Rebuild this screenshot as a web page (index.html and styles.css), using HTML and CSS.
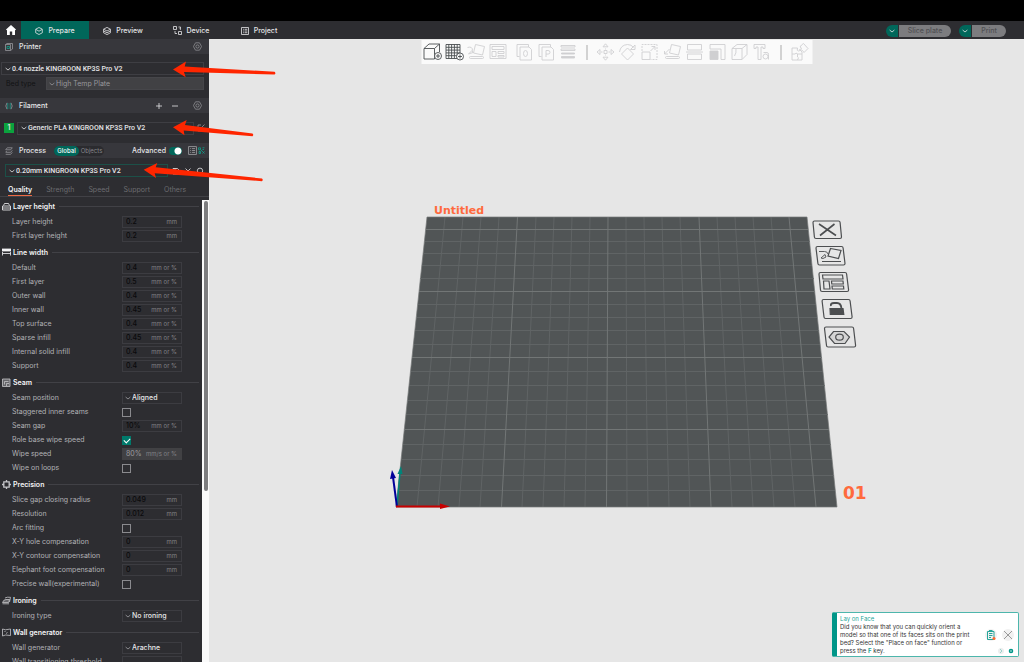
FILE: index.html
```html
<!DOCTYPE html>
<html lang="en">
<head>
<meta charset="utf-8">
<title>Untitled</title>
<link rel="stylesheet" href="styles.css">
</head>
<body>
<svg class="defs" width="0" height="0" aria-hidden="true">
  <symbol id="chev" viewBox="0 0 6 6"><path d="M.6 2l2.400 2 2.400-2"/></symbol>
  <symbol id="nut" viewBox="0 0 10 10"><path d="M2.800.900h4.400L9.500 5 7.200 9.100H2.800L.5 5z"/><circle cx="5" cy="5" r="1.800"/></symbol>
</svg>
<div class="app">
  <div class="strip"></div>
  <header class="topbar">
    <button class="home" aria-label="Home"><svg width="10" height="10" viewBox="0 0 10 10"><path d="M5 0l5 4.400-.7.8L9 5v5H6.200V6.500H3.800V10H1V5l-.4.2L0 4.400z"/></svg></button>
    <nav class="tabs">
      <button class="tab active"><svg class="ic" width="8" height="8" viewBox="0 0 8 8"><path d="M4 .5l3.300 1.700v3.600L4 7.500.7 5.800V2.200zM.9 2.400L4 4.200l3.100-1.800"/></svg>Prepare</button>
      <button class="tab"><svg class="ic" width="8" height="8" viewBox="0 0 8 8"><path d="M4 .4l3.400 1.800L4 4 .6 2.200zM.6 2.200v3.600L4 7.600l3.400-1.800V2.200M.6 4L4 5.800 7.400 4"/></svg>Preview</button>
      <button class="tab"><svg class="ic" width="9" height="9" viewBox="0 0 9 9"><path d="M.5.5h3v3h-3zM5.500 5.500h3v3h-3zM5.500 1h2v2.500M2 5v2.500h2M7.500 3.500L6.500 2.700"/></svg>Device</button>
      <button class="tab"><svg class="ic" width="8" height="8" viewBox="0 0 8 8"><path d="M.5.5h7v7h-7zM2 2.300h.8M3.600 2.300h2.700M2 4h.8M3.600 4h2.700M2 5.700h.8M3.600 5.700h2.700"/></svg>Project</button>
    </nav>
    <div class="actions">
      <div class="pill"><button class="drop" aria-label="Slice options"><svg class="ic" width="6" height="6"><use href="#chev"/></svg></button><button class="go slice" disabled>Slice plate</button></div>
      <div class="pill"><button class="drop" aria-label="Print options"><svg class="ic" width="6" height="6"><use href="#chev"/></svg></button><button class="go" disabled>Print</button></div>
    </div>
  </header>
  <div class="main">
    <aside class="side">
      <div class="bar">
        <svg class="ic dim" width="8" height="8" viewBox="0 0 8 8"><path d="M.5 1.500h5v6h-5zM.5 1.500l1.500-1h5.500v5.500l-2 1.500"/><path class="teal" d="M2 3.500h2.500v2H2z"/></svg>
        <h2>Printer</h2>
        <button class="icon end" aria-label="Printer settings"><svg class="ic dim" width="9" height="9"><use href="#nut"/></svg></button>
      </div>
      <div class="block printer">
        <button class="combo"><svg class="ic" width="6" height="6"><use href="#chev"/></svg>0.4 nozzle KINGROON KP3S Pro V2</button>
        <div class="bed"><span>Bed type</span><button class="combo gray"><svg class="ic" width="6" height="6"><use href="#chev"/></svg>High Temp Plate</button></div>
      </div>
      <div class="bar">
        <svg class="ic dim" width="8" height="8" viewBox="0 0 8 8"><path d="M2 .8Q-.4 4 2 7.200M6 .8q2.400 3.200 0 6.400"/><path class="teal" d="M2.800 1v6M5.200 1v6"/></svg>
        <h2>Filament</h2>
        <button class="icon end" aria-label="Add filament"><svg class="ic" width="8" height="8" viewBox="0 0 8 8"><path d="M4 1v6M1 4h6"/></svg></button>
        <button class="icon" aria-label="Remove filament"><svg class="ic" width="8" height="8" viewBox="0 0 8 8"><path d="M1 4h6"/></svg></button>
        <button class="icon far" aria-label="Filament settings"><svg class="ic dim" width="9" height="9"><use href="#nut"/></svg></button>
      </div>
      <div class="block filament">
        <span class="slot">1</span>
        <button class="combo"><svg class="ic" width="6" height="6"><use href="#chev"/></svg>Generic PLA KINGROON KP3S Pro V2</button>
        <button class="icon" aria-label="Edit filament"><svg class="ic dim" width="8" height="8" viewBox="0 0 8 8"><path d="M4 1H1v6h6V4M3 5l4.500-4.500"/></svg></button>
      </div>
      <div class="bar modes">
        <svg class="ic dim" width="8" height="8" viewBox="0 0 8 8"><path d="M2.300.8h5l-1.600 2h-5zM.7 5.200l1-1.200M.7 5.300h5l1.600-2M.7 7.300h5l1.600-2"/></svg>
        <h2>Process</h2>
        <div class="seg"><button class="on">Global</button><button>Objects</button></div>
        <label class="adv" for="adv">Advanced</label>
        <input class="switch" type="checkbox" id="adv" checked>
        <button class="icon" aria-label="Compare"><svg class="ic dim" width="9" height="9" viewBox="0 0 8 8"><path d="M.5.5h7v7h-7zM2 2.300h.8M3.600 2.300h2.700M2 4h.8M3.600 4h2.700M2 5.700h.8M3.600 5.700h2.700"/></svg></button>
        <button class="icon" aria-label="Search settings"><svg class="ic" width="7" height="7" viewBox="0 0 7 7"><path class="teal" d="M.5.800h2v2h-2zM4.500.800h2M4.500 2.500h1.500M1 4.500h1.500v2H1zM3 3l3.500 3.500M4.500 6.500l2-2"/></svg></button>
      </div>
      <div class="block process">
        <button class="combo tealed"><svg class="ic" width="6" height="6"><use href="#chev"/></svg>0.20mm KINGROON KP3S Pro V2</button>
        <button class="icon" aria-label="Save"><svg class="ic" width="8" height="8" viewBox="0 0 8 8"><path d="M1 1.500h4.500L7 3v4H1zM3 1.500v2h2"/></svg></button>
        <button class="icon" aria-label="Delete"><svg class="ic" width="8" height="8" viewBox="0 0 8 8"><path d="M1.500 1.500l5 5M6.500 1.500l-5 5"/></svg></button>
        <button class="icon" aria-label="Search"><svg class="ic" width="8" height="8" viewBox="0 0 8 8"><circle cx="4" cy="3.800" r="2.700"/><path d="M5.800 5.800l1 1.200"/></svg></button>
      </div>
      <nav class="pages"><button class="on">Quality</button><button>Strength</button><button>Speed</button><button>Support</button><button>Others</button></nav>
      <div class="panel">
        <form class="form">
          <h3><svg class="ic" width="9" height="9" viewBox="0 0 9 9"><path d="M.5 4h8v4h-8zM.5 6h8M1.500 3.500l1-2h4l1 2"/></svg>Layer height</h3>
          <div class="row"><label for="a1">Layer height</label><span class="field"><input id="a1" value="0.2"><i>mm</i></span></div>
          <div class="row"><label for="a2">First layer height</label><span class="field"><input id="a2" value="0.2"><i>mm</i></span></div>
          <h3><svg class="ic" width="9" height="9" viewBox="0 0 9 9"><path class="solid" d="M0 1h9v2H0z"/><path d="M.5 4v3.500M8.500 4v3.500M.5 5.500h8"/></svg>Line width</h3>
          <div class="row"><label for="b1">Default</label><span class="field"><input id="b1" value="0.4"><i>mm or %</i></span></div>
          <div class="row"><label for="b2">First layer</label><span class="field"><input id="b2" value="0.5"><i>mm or %</i></span></div>
          <div class="row"><label for="b3">Outer wall</label><span class="field"><input id="b3" value="0.4"><i>mm or %</i></span></div>
          <div class="row"><label for="b4">Inner wall</label><span class="field"><input id="b4" value="0.45"><i>mm or %</i></span></div>
          <div class="row"><label for="b5">Top surface</label><span class="field"><input id="b5" value="0.4"><i>mm or %</i></span></div>
          <div class="row"><label for="b6">Sparse infill</label><span class="field"><input id="b6" value="0.45"><i>mm or %</i></span></div>
          <div class="row"><label for="b7">Internal solid infill</label><span class="field"><input id="b7" value="0.4"><i>mm or %</i></span></div>
          <div class="row"><label for="b8">Support</label><span class="field"><input id="b8" value="0.4"><i>mm or %</i></span></div>
          <h3><svg class="ic soft" width="9" height="9" viewBox="0 0 9 9"><path class="shade" d="M.5 1h7.500v7.500H.5z"/><path d="M2.500 6.500v-3h4M4.500 8V5.500H7"/></svg>Seam</h3>
          <div class="row"><label for="c1">Seam position</label><span class="field pick"><svg class="ic" width="6" height="6"><use href="#chev"/></svg><select id="c1"><option>Aligned</option></select></span></div>
          <div class="row"><label for="c2">Staggered inner seams</label><input class="tick" type="checkbox" id="c2"></div>
          <div class="row"><label for="c3">Seam gap</label><span class="field"><input id="c3" value="10%"><i>mm or %</i></span></div>
          <div class="row"><label for="c4">Role base wipe speed</label><input class="tick" type="checkbox" id="c4" checked></div>
          <div class="row"><label for="c5">Wipe speed</label><span class="field off"><input id="c5" value="80%" disabled><i>mm/s or %</i></span></div>
          <div class="row"><label for="c6">Wipe on loops</label><input class="tick" type="checkbox" id="c6"></div>
          <h3><svg class="ic soft" width="9" height="9" viewBox="0 0 9 9"><path class="bold" d="M1.800 1.800h5.400v5.400H1.800zM4.500 0v2.500M4.500 6.500V9M0 4.500h2.500M6.500 4.500H9"/></svg>Precision</h3>
          <div class="row"><label for="d1">Slice gap closing radius</label><span class="field"><input id="d1" value="0.049"><i>mm</i></span></div>
          <div class="row"><label for="d2">Resolution</label><span class="field"><input id="d2" value="0.012"><i>mm</i></span></div>
          <div class="row"><label for="d3">Arc fitting</label><input class="tick" type="checkbox" id="d3"></div>
          <div class="row"><label for="d4">X-Y hole compensation</label><span class="field"><input id="d4" value="0"><i>mm</i></span></div>
          <div class="row"><label for="d5">X-Y contour compensation</label><span class="field"><input id="d5" value="0"><i>mm</i></span></div>
          <div class="row"><label for="d6">Elephant foot compensation</label><span class="field"><input id="d6" value="0"><i>mm</i></span></div>
          <div class="row"><label for="d7">Precise wall(experimental)</label><input class="tick" type="checkbox" id="d7"></div>
          <h3><svg class="ic soft" width="9" height="9" viewBox="0 0 9 9"><path class="shade" d="M.5 6.500Q1.500 3.500 4 3.500h3.500l-.8 3z"/><path d="M3 2q2-1.200 5.500-.7L7.500 6M.5 7.800h6.500"/></svg>Ironing</h3>
          <div class="row"><label for="e1">Ironing type</label><span class="field pick"><svg class="ic" width="6" height="6"><use href="#chev"/></svg><select id="e1"><option>No ironing</option></select></span></div>
          <h3><svg class="ic soft" width="9" height="9" viewBox="0 0 9 9"><path d="M.5 1l3 .8 5-.8v6.500L3.500 7l-3 1zM2.500 3.500h1M4 5.500l1.500-1"/></svg>Wall generator</h3>
          <div class="row"><label for="f1">Wall generator</label><span class="field pick"><svg class="ic" width="6" height="6"><use href="#chev"/></svg><select id="f1"><option>Arachne</option></select></span></div>
          <div class="row"><label for="f2">Wall transitioning threshold</label><span class="field"><input id="f2"><i></i></span></div>
        </form>
        <div class="track"><div class="thumb"></div></div>
      </div>
    </aside>
    <main class="view">
      <svg class="scene" viewBox="209 39 815 623">
        <path class="plate" d="M427 217H807L837 507H396z"/>
        <path class="thin" d="M445 217L417 507M463 217L438 507M481 217L459 507M499 217L480 507M536 217L522 507M554 217L543 507M572 217L564 507M590 217L585 507M626 217L627 507M644 217L648 507M662 217L669 507M680 217L690 507M717 217L732 507M735 217L753 507M753 217L774 507M771 217L795 507"/>
        <path class="thin" d="M398 490.500H835M399 475.500H834M401 459.500H832M403 444.500H831M406 414.500H828M408 400.500H826M409 385.500H825M411 371.500H823M414 344.500H820M415 330.500H819M417 317.500H817M418 304.500H816M420 278.500H814M422 265.500H812M423 253.500H811M425 241.500H810"/>
        <path class="thick" d="M517.500 217L501.500 507M608 217L606.500 507M699 217L711 507M789 217L816 507M405 429.500H829M412 357.500H822M419 291.500H815M426 229.500H808"/>
        <path class="edge" d="M427 217H807L837 507H396z"/>
        <text class="name" x="434" y="214">Untitled</text>
        <text class="num" x="843" y="499">01</text>
        <g class="axes">
          <path stroke="#00857a" stroke-width="1.500" d="M397 506L400 473"/><path fill="#00857a" d="M397.500 474L401 466l1.500 8z"/>
          <path stroke="#000099" stroke-width="2" d="M397 507L393 477"/><path fill="#000099" d="M390 479L392 470l4 8z"/>
          <path stroke="#c80000" stroke-width="2" d="M396 506.500H442"/><path fill="#c80000" d="M440 503.500L450 506.500 440 509z"/>
        </g>
        <g class="tools">
          <path d="M814.500 221h24q1.500 0 1.600 1.500l1.400 14.500q0 1.500-1.500 1.500h-24q-1.500 0-1.600-1.500l-1.400-14.500q0-1.500 1.500-1.500z"/>
          <path stroke-width="1.600" d="M819 224l17 11.500M834.500 224L820 235.500"/>
          <path d="M817.500 246.500h24q1.500 0 1.600 1.500l1.900 15.500q0 1.500-1.500 1.500h-24q-1.500 0-1.600-1.500L816 248q0-1.500 1.500-1.500z"/>
          <path d="M830.500 248.500l10.500 2-2.500 8-10.500-2.500zM822 261.500h19"/><path stroke-width=".9" d="M819 251.500h5.500q3 0 3.500 2.500M821 258l4-3.500 1 2.500-3 1.500z"/>
          <path d="M820.500 272.500h24.500q1.500 0 1.600 1.500l2 16q0 1.500-1.500 1.500h-25q-1.500 0-1.600-1.500l-1.500-16q0-1.500 1.500-1.500zM822.500 275h20l.5 4h-20zM823.500 281h5.500l1 8h-6zM831.500 281h11.500l.3 3h-11.500zM832 286h11.500l.3 3h-11.500z"/>
          <path d="M823.500 299.500h25q1.500 0 1.600 1.500l2 16q0 1.500-1.500 1.500h-25q-1.500 0-1.600-1.500l-1.900-16q0-1.500 1.400-1.500z"/>
          <path class="fill" d="M830 308.500h13l.8 6h-13.500z"/><path stroke-width="1.800" d="M831 306q-.8-3 3-3h3q4 0 4.500 5.500"/>
          <path d="M826 327h26q1.500 0 1.600 1.500l2 17q0 1.500-1.500 1.500h-26q-1.500 0-1.600-1.500l-2-17q0-1.500 1.500-1.500z"/>
          <path class="hex" d="M833.500 331.500h10.500l5.500 5.500-4.500 6.500h-10.500l-5.500-6.500z"/><ellipse cx="839.500" cy="337.200" rx="3.800" ry="3"/>
        </g>
      </svg>
      <div class="toolbar">
        <div class="grp on">
          <button aria-label="Add"><svg width="20" height="18" viewBox="0 0 20 18"><path d="M1.500 5.500h10.500v10.500H1.500zM1.500 5.500l5-4.500H17l-5 4.500M17 1v8"/><circle class="bg" cx="15.500" cy="13" r="3.500"/><path d="M15.500 11v4M13.500 13h4"/></svg></button>
          <button aria-label="Add plate"><svg width="20" height="18" viewBox="0 0 20 18"><path d="M1.500 1.500h14v14h-14zM4.300 1.500v14M7.100 1.500v14M9.900 1.500v14M12.700 1.500v14M1.500 4.300h14M1.500 7.100h14M1.500 9.900h14M1.500 12.700h14"/><circle class="bg" cx="15.500" cy="13.500" r="3.500"/><path d="M15.500 11.500v4M13.500 13.500h4"/></svg></button>
          <button class="no" aria-label="Auto orient"><svg width="20" height="18" viewBox="0 0 20 18"><path d="M9 1.500l9 2-2 8.500-9-2zM4 13.500h12q1 0 1 1t-1 1H4q-1 0-1-1t1-1zM1 4.500q5-1.500 5 3M2 11l3.500-3.500 1 2z"/></svg></button>
          <button class="no" aria-label="Arrange"><svg width="20" height="18" viewBox="0 0 20 18"><path d="M1.500 1.500h16v14h-16zM3.500 3.500h12v3h-12zM3.500 8.500h4v5h-4zM9.500 8.500h6v2h-6zM9.500 12.500h6v1.500h-6z"/></svg></button>
        </div>
        <div class="grp near">
          <button aria-label="Split to objects"><svg width="20" height="18" viewBox="0 0 20 18"><path d="M14 4V1.500H2.500v12H5M5.500 4h9l2.500 2.500V17H5.500z"/><ellipse cx="11" cy="10.500" rx="2" ry="3"/></svg></button>
          <button aria-label="Split to parts"><svg width="20" height="18" viewBox="0 0 20 18"><path d="M14 4V1.500H2.500v12H5M5.500 4h9l2.500 2.500V17H5.500zM9.500 14V7.500h2q2 0 2 1.800t-2 1.800h-2"/></svg></button>
          <button aria-label="Variable layer height"><svg width="20" height="18" viewBox="0 0 20 18"><path d="M2.500 2.500h14v1.500h-14zM2.500 6h14v1.500h-14z"/><path class="solid" d="M3 10h13v1H3zM3 13.500h13v1.500H3z"/></svg></button>
        </div>
        <span class="sep"></span>
        <div class="grp wide">
          <button aria-label="Move"><svg width="20" height="18" viewBox="0 0 20 18"><path d="M10 .8l2.500 3h-5zM10 17.200l2.500-3h-5zM1.500 9l3-2.500v5zM18.500 9l-3-2.500v5zM8.500 7.500h3v3h-3zM10 5.500v1M10 11.500v1M5.500 9h1.500M13 9h1.500"/></svg></button>
          <button aria-label="Rotate"><svg width="20" height="18" viewBox="0 0 20 18"><path d="M10 5l6 6-6 6-6-6zM2 9q1-7 8-7.500 4 0 6 3M17.500 2v4.500H13z"/></svg></button>
          <button aria-label="Scale"><svg width="20" height="18" viewBox="0 0 20 18"><path stroke-dasharray="2 1" d="M2.500 8V1.500h15v15H11"/><path d="M2.500 9h8v7.500h-8zM11 8l4-4M12 3.500h3.500V7"/></svg></button>
          <button aria-label="Place on face"><svg width="20" height="18" viewBox="0 0 20 18"><path d="M9 1.500l9 2-2 8.500-9-2zM4 13.500h12q1 0 1 1t-1 1H4q-1 0-1-1t1-1zM7 6L2 11M2 8v3h3.500"/></svg></button>
          <button aria-label="Cut"><svg width="20" height="18" viewBox="0 0 20 18"><path d="M3 7V1.500h14V7zM3 11v5.500h14V11zM1.500 9h17"/></svg></button>
          <button aria-label="Support painting"><svg width="20" height="18" viewBox="0 0 20 18"><path d="M2.500 1.500h15v15h-4V6h-11z"/><path class="solid" d="M2.500 8h8v8.500h-8z"/></svg></button>
          <button aria-label="Seam painting"><svg width="20" height="18" viewBox="0 0 20 18"><path d="M2.500 5.500h10v11h-10zM2.500 5.500l5-4h10l-5 4M17.500 1.500v10l-5 5M5 13q2-3 1.500-7"/></svg></button>
          <button aria-label="Text"><svg width="20" height="18" viewBox="0 0 20 18"><path d="M2.500 1.500h11v4h-2v-1.500h-2v12.500h-3V4h-2v1.500h-2z"/><circle cx="14" cy="13.500" r="2.500"/><path d="M12 9.500h3.500q1.500 0 1.500 2v5"/></svg></button>
        </div>
        <span class="sep"></span>
        <div class="grp">
          <button aria-label="Assembly view"><svg width="20" height="18" viewBox="0 0 20 18"><path d="M2.500 5h5.500q-1 3 1 3t1-1.500l2.500 2.500v8H2.500zM2.500 11h3q1.500-2 2 0h5M8 11v3q2 0 0 3M12 2l2-1.500 4.500 5-4 4-1.500-2-2-1 1-1.500-1.500-1z"/></svg></button>
        </div>
      </div>
      <aside class="tip">
        <div class="copy"><h4>Lay on Face</h4><p>Did you know that you can quickly orient a<br>model so that one of its faces sits on the print<br>bed? Select the "Place on face" function or<br>press the <b>F</b> key.</p></div>
        <div class="ctl">
          <div class="pair">
            <button class="round" aria-label="Open documentation"><svg width="12" height="12" viewBox="0 0 12 12"><path fill="none" stroke="#26a69a" d="M2.500 2.500h6.500v8H2.500zM4 1.500h3.500M4 4.500h3.500M4 6.500h3.500M4 8.500h2"/><circle cx="9" cy="9.500" r="1.500" fill="#ff6a30"/></svg></button>
            <button class="round" aria-label="Close"><svg width="12" height="12" viewBox="0 0 12 12"><path fill="none" stroke="#999" d="M2 2l8 8M10 2l-8 8"/></svg></button>
          </div>
          <div class="dots">
            <button aria-label="Next tip"><svg width="6" height="6" viewBox="0 0 6 6"><circle cx="3" cy="3" r="3" fill="#eceeee"/><path fill="none" stroke="#9ad2cc" d="M2 1l2 2-2 2"/></svg></button>
            <button aria-label="Tip settings"><svg width="6" height="6" viewBox="0 0 6 6"><circle cx="3" cy="3" r="1.500" fill="none" stroke="#009688" stroke-width="1.600"/></svg></button>
          </div>
        </div>
      </aside>
    </main>
  </div>
  <svg class="arrows" width="300" height="200" viewBox="0 0 300 200" aria-hidden="true"><path d="M173 69.500L186 61.500 184.700 66.500 274.500 71.800q1.800 1.300 0 2.700L184 72l1.700 5.300zM173 127.300L186.700 120l-1.700 5 67.500 8.500q1.500 1.300 0 2.700L183.700 130.500l.8 4.800zM143.700 169.700L157.300 163l-1.600 4.300L262 178.500q1.500 1.300 0 2.700L154.700 173.200 156 178z"/></svg>
</div>
</body>
</html>
```
FILE: styles.css
```css
* { box-sizing: border-box; }
body { margin: 0; font-family: Inter, "Liberation Sans", sans-serif; font-size: 7px; line-height: 10px; color: #e6e6e8; }
button, input, select { font: inherit; color: inherit; background: none; border: 0; padding: 0; margin: 0; }
button { cursor: pointer; display: flex; align-items: center; justify-content: center; }
h2, h3, h4, p { margin: 0; font-size: inherit; }
svg { display: block; flex: none; }
.defs { position: absolute; }
.ic { fill: none; stroke: currentColor; stroke-width: 0.8; }
.dim { color: #96969a; }
.soft { color: #c4c4c8; }
.teal { stroke: #10a08c; }
.solid { fill: currentColor; }
.shade { fill: #66666a; }
.bold { stroke-width: 1.3; }

.app { position: relative; display: flex; flex-direction: column; height: 100vh; overflow: hidden; background: #2d2d31; }
.strip { height: 21px; background: #000; flex: none; }
.topbar { display: flex; height: 18px; flex: none; background: #2d2d31; }
.home { width: 21px; }
.home svg { fill: #fff; }
.tabs { display: flex; }
.tab { width: 68px; gap: 5px; padding-top: 1px; font-weight: 500; }
.tab.active { background: #00675a; }
.actions { display: flex; align-items: center; gap: 8px; margin-left: auto; padding: 1px 18px 0 0; }
.pill { display: flex; gap: 1px; height: 12px; }
.drop { width: 12px; background: #00675a; border-radius: 6px 0 0 6px; }
.go { width: 34px; background: #7c7c7f; color: #505053; border-radius: 0 6px 6px 0; font-weight: 500; }
.go.slice { width: 52px; }

.main { display: flex; flex: 1; min-height: 0; }
.side { width: 209px; flex: none; display: flex; flex-direction: column; min-height: 0; }
.bar { display: flex; align-items: center; gap: 6px; height: 15px; flex: none; padding: 0 7px 0 5px; background: #37373c; }
.bar.modes { padding-right: 4px; }
.bar h2 { font-weight: 500; }
.icon { flex: none; }
.end { margin-left: auto; }
.bar .icon + .icon { margin-left: 2px; }
.bar .icon + .far { margin-left: 8px; }
.bar .switch ~ .icon + .icon { margin-left: -5px; }
.block { flex: none; display: flex; }
.combo { justify-content: flex-start; gap: 1px; height: 13px; flex: 1; padding-left: 3px; border: 1px solid #3e3e43; font-family: Roboto, sans-serif; font-weight: 500; white-space: nowrap; }
.printer { flex-direction: column; gap: 2px; padding: 8px 5px 8px 1px; height: 44px; }
.printer > .combo { flex: none; }
.bed { display: flex; align-items: center; color: #121214; padding-left: 5px; }
.bed span { width: 40px; }
.combo.gray { background: #414144; border-color: #46464a; color: #98989c; font-family: inherit; font-weight: 400; padding-left: 2px; }
.filament { align-items: center; height: 30px; padding: 0 4px; gap: 3px; }
.slot { width: 10px; height: 10px; background: #0ba33e; text-align: center; font-weight: 600; }
.process { align-items: center; height: 25px; padding: 0 5px; gap: 4px; }
.tealed { border-color: #1c5048; }
.seg { display: flex; height: 10px; margin-left: 2px; border-radius: 5px; background: #2b2b2f; font-size: 6px; color: #85858a; }
.seg button { width: 25px; border-radius: 5px; }
.seg .on { background: #00675a; color: #fff; width: 25px; font-weight: 500; }
.adv { margin-left: auto; font-weight: 500; }
.switch { appearance: none; width: 13px; height: 8px; border-radius: 4px; background: radial-gradient(circle at 9px 4px, #fff 3px, #00675a 4px); margin-left: -3px; }
.pages { display: flex; gap: 14px; height: 14px; flex: none; padding: 0 8px; align-items: flex-start; color: #6c6c70; border-bottom: 1px solid #414146; }
.pages button { height: 13px; padding-top: 1px; border-bottom: 1px solid transparent; }
.pages .on { color: #f2f2f4; font-weight: 600; border-color: #ee6a45; }

.panel { display: flex; flex: 1; min-height: 0; gap: 3px; }
.form { flex: 1; min-width: 0; overflow: hidden; }
.form h3 { display: flex; align-items: center; gap: 2px; height: 18px; padding: 1px 0 0 2px; font-weight: 600; color: #f4f4f6; }
.form h3::after { content: ""; flex: 1; height: 1px; margin-left: 2px; background: #414146; }
.row { display: flex; align-items: center; height: 14px; padding-left: 12px; color: #b2b2b6; }
.row label { width: 110px; white-space: nowrap; }
.field { display: flex; align-items: center; width: 60px; height: 12px; border: 1px solid #3c3c41; padding: 0 4px 0 3px; }
.field input { flex: 1; min-width: 0; width: 10px; height: 10px; color: #0a0a0c; font-weight: 500; }
.field i { font-style: normal; font-size: 6px; color: #828286; }
.field.off { background: #414144; border-color: #414144; }
.field.off input { color: #9c9ca0; font-weight: 400; }
.pick { color: #e6e6e8; padding: 0 2px; gap: 1px; }
.pick .ic { color: #a0a0a4; }
.pick select { appearance: none; flex: 1; font-weight: 500; }
.tick { appearance: none; width: 9px; height: 9px; border: 1px solid #8a8a8e; }
.tick:checked { border-color: #00796b; background: #00796b; display: grid; place-items: center; }
.tick:checked::after { content: ""; width: 5px; height: 3px; border: solid #fff; border-width: 0 0 1px 1px; rotate: -45deg; margin-bottom: 1px; }
.track { width: 7px; margin-top: 3px; padding: 1px 1px 0 2px; background: #fafafa; flex: none; }
.thumb { height: 63%; border-radius: 2px; background: #7d7d7f; }

.view { position: relative; flex: 1; min-width: 0; background: #e6e6e6; }
.scene { width: 100%; height: 100%; fill: none; }
.plate { fill: #515556; }
.thin { stroke: #606465; }
.thick { stroke: #727676; }
.edge { stroke: #757979; stroke-width: 0.7; }
.name { fill: #ff6a3d; font: bold 11px "DejaVu Sans", sans-serif; }
.num { fill: #ff6a3d; font: bold 17px "DejaVu Sans", sans-serif; }
.tools { stroke: #4c4e50; stroke-width: 1.2; }
.tools .fill { fill: #4c4e50; }
.tools .hex { fill: #d4d4d4; }
.toolbar { position: absolute; top: 1px; left: 50%; translate: -50% 0; display: flex; align-items: center; gap: 8px; width: 391px; height: 24px; padding-left: 1px; background: #fafafa; }
.grp { display: flex; gap: 2px; color: #cfcfd1; }
.grp.near { margin-left: -2px; }
.grp.wide { width: 177px; gap: 0; justify-content: space-between; }
.grp.on { color: #4a4e50; }
.grp .no { color: #cfcfd1; }
.grp svg { fill: none; stroke: currentColor; stroke-width: 0.9; }
.grp svg .bg { fill: #fafafa; }
.grp svg .solid { fill: currentColor; }
.sep { width: 1px; height: 15px; background: #aaa; }
.tip { position: absolute; right: 5px; bottom: 5px; display: flex; justify-content: space-between; width: 187px; height: 45px; padding: 2px 3px 0 3px; background: #fff; border: 1px solid #4db6ac; border-left: 5px solid #009688; border-radius: 2px; font-size: 6px; line-height: 8px; color: #333; white-space: nowrap; }
.tip h4 { font-weight: 400; color: #26a69a; }
.tip b { color: #26a69a; }
.ctl { display: flex; flex-direction: column; justify-content: flex-end; gap: 7px; padding: 0 1px 2px 0; }
.pair { display: flex; gap: 5px; }
.dots { display: flex; gap: 4px; justify-content: flex-end; }
.round { border-radius: 6px; background: #f1f1f1; }
.arrows { position: absolute; top: 0; left: 0; fill: #ff2600; pointer-events: none; }
```
